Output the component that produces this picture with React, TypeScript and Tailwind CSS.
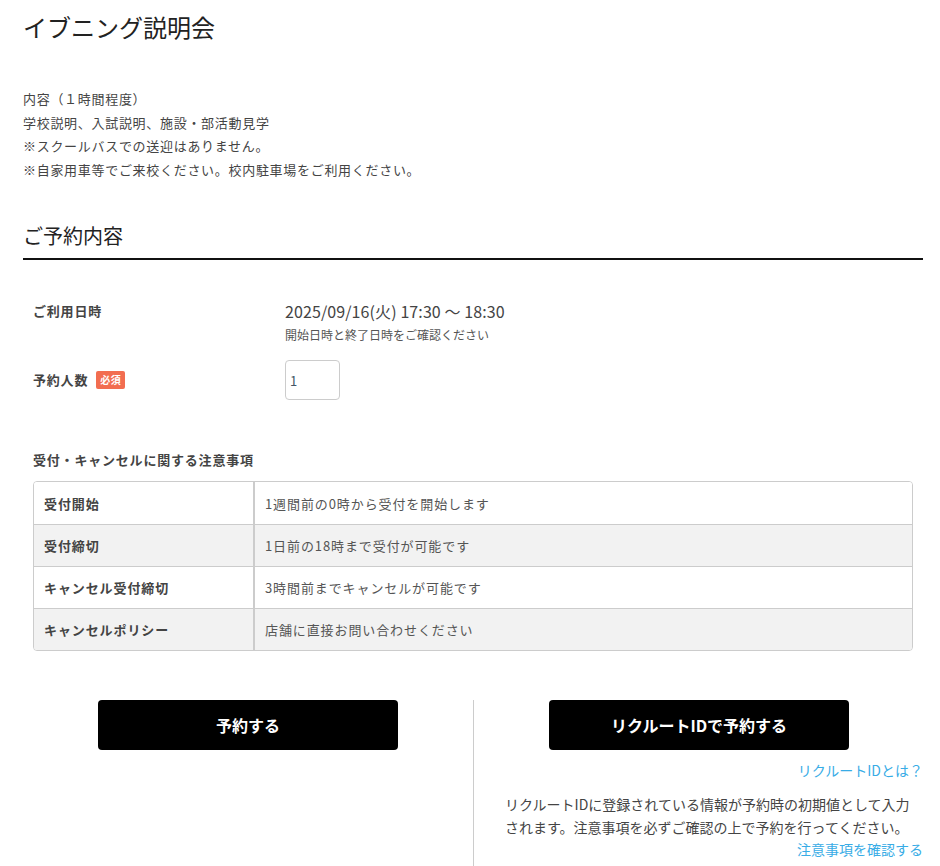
import React from "react"

const font = { fontFamily: '"Noto Sans CJK JP", "Noto Sans", sans-serif' }

const notes = [
  { label: "受付開始", value: "1週間前の0時から受付を開始します" },
  { label: "受付締切", value: "1日前の18時まで受付が可能です" },
  { label: "キャンセル受付締切", value: "3時間前までキャンセルが可能です" },
  { label: "キャンセルポリシー", value: "店舗に直接お問い合わせください" },
]

export default function App() {
  return (
    <div className="w-[940px] bg-white px-[23px] pt-[11px] text-[#444]" style={font}>
      <h1 className="text-[24px] font-normal leading-[32px] text-[#222]">イブニング説明会</h1>

      <div className="mt-[44px] text-[13px] leading-[23.6px] tracking-[0.7px] text-[#444]">
        <p>内容（１時間程度）</p>
        <p>学校説明、入試説明、施設・部活動見学</p>
        <p>※スクールバスでの送迎はありません。</p>
        <p>※自家用車等でご来校ください。校内駐車場をご利用ください。</p>
      </div>

      <h2 className="mt-[40px] w-[900px] border-b-2 border-[#111] pb-[7px] text-[20px] font-normal leading-[30px] text-[#222]">
        ご予約内容
      </h2>

      <div className="mt-[39px] px-[10px]">
        <div className="flex">
          <div className="w-[252px] text-[13px] font-bold leading-[24px] tracking-[0.8px] text-[#444]">ご利用日時</div>
          <div>
            <div className="text-[16px] leading-[24px] tracking-[0.1px] text-[#444]">2025/09/16(火) 17:30 〜 18:30</div>
            <div className="mt-[3px] text-[12px] leading-[18px] text-[#555]">開始日時と終了日時をご確認ください</div>
          </div>
        </div>
        <div className="mt-[16px] flex items-center">
          <div className="flex w-[252px] items-center text-[13px] font-bold leading-[24px] tracking-[0.8px] text-[#444]">
            予約人数
            <span className="ml-[8px] rounded-[2px] bg-[#f26d50] px-[4px] text-[10px] leading-[18px] tracking-[0.5px] text-white">必須</span>
          </div>
          <input
            defaultValue="1"
            className="h-[40px] w-[55px] rounded-[4px] border border-[#ccc] px-[4px] text-[13px] text-[#456] outline-none"
            style={font}
          />
        </div>

        <div className="mt-[50px] text-[13px] font-bold leading-[20px] tracking-[0.8px] text-[#444]">受付・キャンセルに関する注意事項</div>

        <div className="mt-[11px] w-[880px] overflow-hidden rounded-[4px] border border-[#ccc]">
          {notes.map((n, i) => (
            <div
              key={n.label}
              className={`flex h-[42px] items-center text-[13px] ${i > 0 ? "border-t border-[#ccc]" : ""} ${i % 2 === 1 ? "bg-[#f2f2f2]" : "bg-white"}`}
            >
              <div className="flex h-full w-[221px] items-center border-r-2 border-[#ccc] pl-[10px] font-bold tracking-[0.9px] text-[#444]">{n.label}</div>
              <div className="pl-[10px] tracking-[0.9px] text-[#555]">{n.value}</div>
            </div>
          ))}
        </div>
      </div>

      <div className="mt-[49px] flex w-[900px]">
        <div className="w-[450px] pl-[75px]">
          <button className="h-[50px] w-[300px] rounded-[4px] bg-black text-[16px] font-bold text-white" style={font}>
            予約する
          </button>
        </div>
        <div className="w-[450px] border-l border-[#ccc] pb-[8px]">
          <div className="pl-[75px]">
            <button className="h-[50px] w-[300px] rounded-[4px] bg-black text-[16px] font-bold text-white" style={font}>
              リクルートIDで予約する
            </button>
          </div>
          <div className="mt-[10px] text-right text-[14px] leading-[20px] text-[#38ace6]">リクルートIDとは？</div>
          <p className="mt-[13px] pl-[31px] text-[14px] leading-[23px] text-[#444]">
            リクルートIDに登録されている情報が予約時の初期値として入力
            <br />
            されます。注意事項を必ずご確認の上で予約を行ってください。
          </p>
          <div className="text-right text-[14px] leading-[20px] text-[#38ace6]">注意事項を確認する</div>
        </div>
      </div>
    </div>
  )
}
